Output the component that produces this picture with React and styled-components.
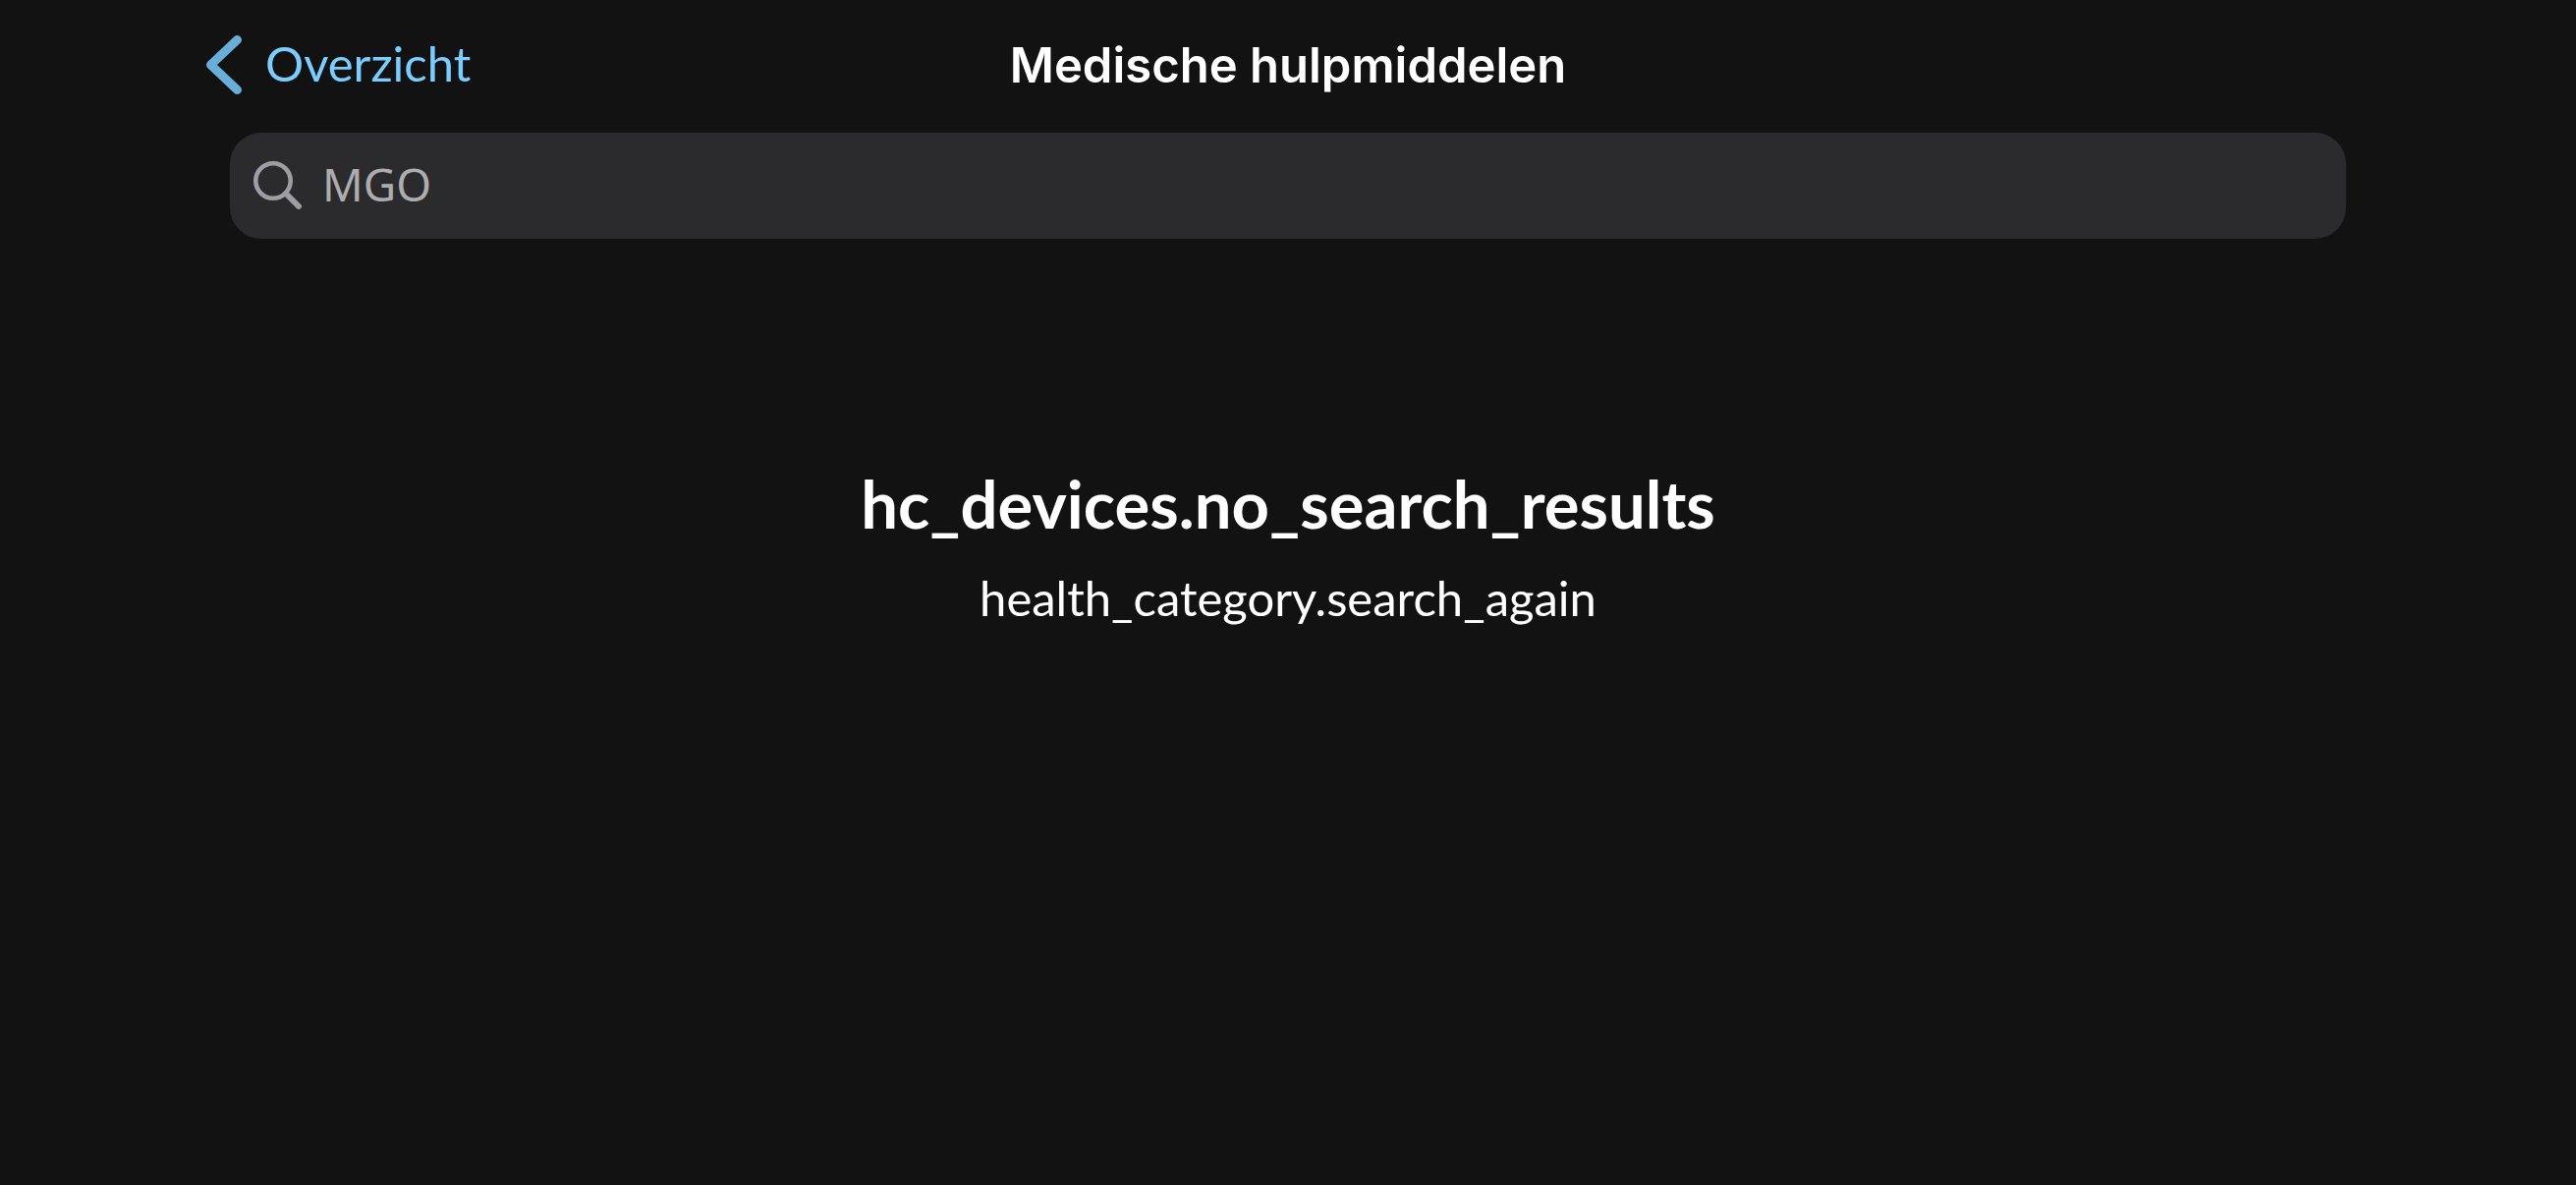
import React from "react";
import styled, { createGlobalStyle } from "styled-components";

const GlobalStyle = createGlobalStyle`
  *, *::before, *::after { box-sizing: border-box; }
  body {
    margin: 0;
    background: #121212;
    color: #ffffff;
    font-family: Lato, "Noto Sans", sans-serif;
  }
`;

const Page = styled.div`
  min-height: 100vh;
  padding: 0 208px;
`;

const NavBar = styled.header`
  display: grid;
  grid-template-columns: 1fr auto 1fr;
  align-items: start;
  padding: 34px 0 35px;
`;

const BackLink = styled.a`
  display: flex;
  align-items: center;
  justify-self: start;
  gap: 22px;
  color: #7acdff;
  font-size: 49px;
  text-decoration: none;
`;

const BackIcon = styled.svg`
  flex: none;
  width: 40px;
  height: 64px;
  color: #68aed8;
`;

const BackLabel = styled.span`
  padding-bottom: 4px;
  line-height: 60px;
`;

const Title = styled.h1`
  margin: 0;
  font-family: Inter, "Liberation Sans", sans-serif;
  font-size: 49px;
  font-weight: 600;
  line-height: 66px;
`;

const SearchField = styled.label`
  display: flex;
  align-items: center;
  gap: 20px;
  height: 108px;
  margin: 0 26px;
  padding: 0 24px;
  border-radius: 32px;
  background: #2b2b2d;
`;

const SearchIcon = styled.svg`
  flex: none;
  width: 50px;
  height: 50px;
  color: #9e9da5;
`;

const SearchInput = styled.input`
  flex: 1;
  min-width: 0;
  padding: 0 0 4px;
  border: 0;
  outline: 0;
  background: transparent;
  color: #adadad;
  font-family: "Noto Sans", sans-serif;
  font-size: 46px;
  line-height: 64px;
`;

const EmptyState = styled.main`
  display: flex;
  flex-direction: column;
  align-items: center;
  gap: 24px;
  padding-top: 229px;
  text-align: center;
`;

const Heading = styled.h2`
  margin: 0;
  font-size: 67px;
  font-weight: 700;
  line-height: 80px;
`;

const Hint = styled.p`
  margin: 0;
  font-size: 49px;
  line-height: 64px;
`;

export default function App() {
  return (
    <>
      <GlobalStyle />
      <Page>
        <NavBar>
          <BackLink href="#overzicht">
            <BackIcon viewBox="0 0 40 64" fill="none" aria-hidden="true">
              <path
                d="M33.5 6.5 6.5 32l27 25.5"
                stroke="currentColor"
                strokeWidth="9"
                strokeLinecap="round"
                strokeLinejoin="round"
              />
            </BackIcon>
            <BackLabel>Overzicht</BackLabel>
          </BackLink>
          <Title>Medische hulpmiddelen</Title>
        </NavBar>
        <SearchField>
          <SearchIcon viewBox="0 0 50 50" fill="none" aria-hidden="true">
            <circle cx="20" cy="20" r="17.7" stroke="currentColor" strokeWidth="4.6" />
            <path d="M33 33 46 46" stroke="currentColor" strokeWidth="6" strokeLinecap="round" />
          </SearchIcon>
          <SearchInput type="text" defaultValue="MGO" aria-label="Zoeken" />
        </SearchField>
        <EmptyState>
          <Heading>hc_devices.no_search_results</Heading>
          <Hint>health_category.search_again</Hint>
        </EmptyState>
      </Page>
    </>
  );
}
